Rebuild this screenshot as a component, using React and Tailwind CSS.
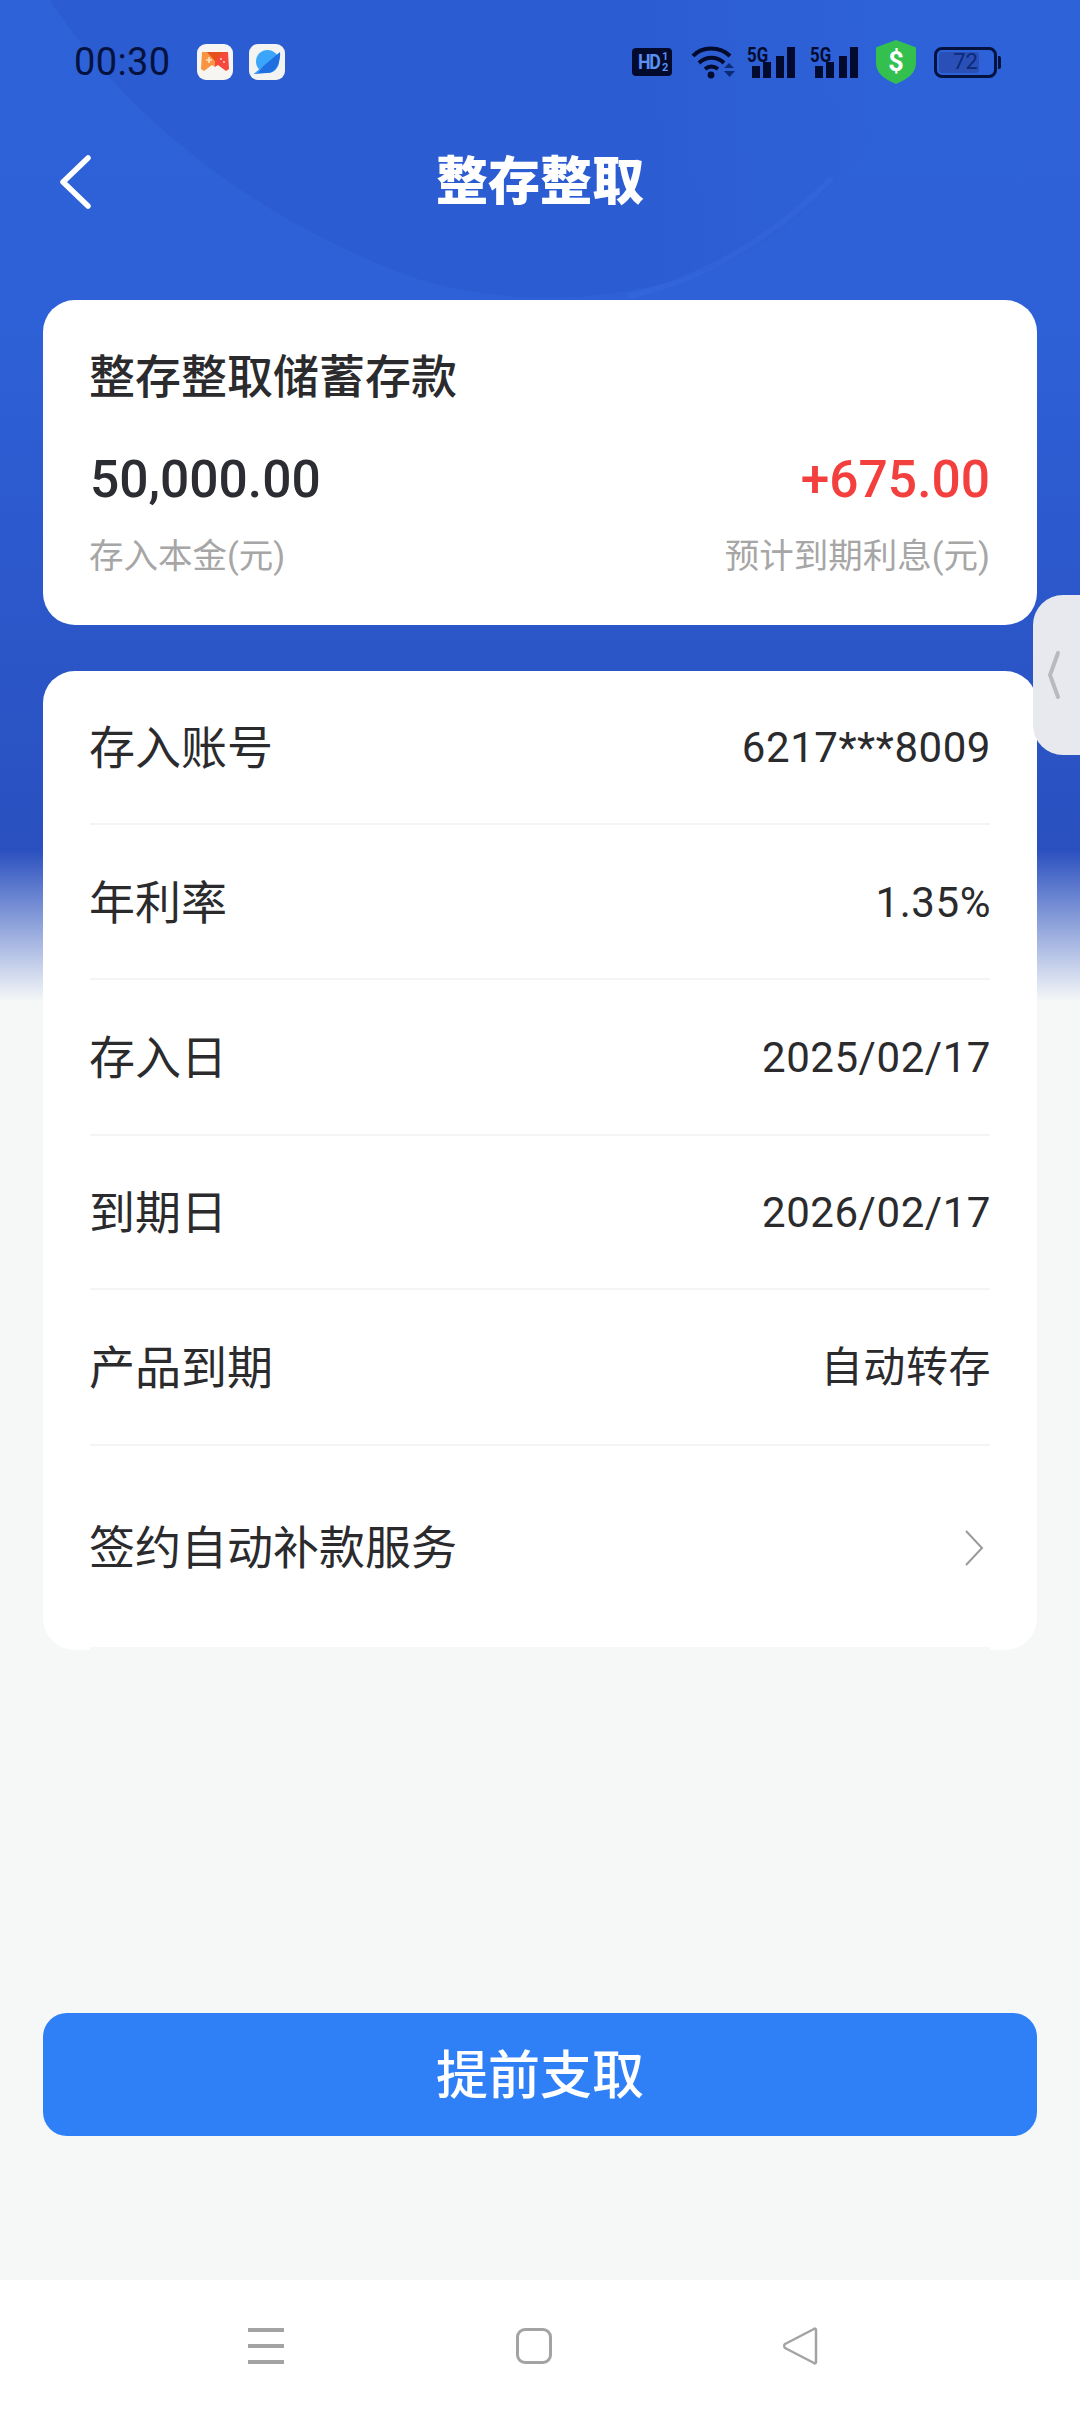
const font = { fontFamily: '"Roboto","Noto Sans CJK SC",sans-serif' };

function StatusBar() {
  return (
    <div className="relative flex h-[124px] items-center justify-between pl-[74px] pr-[79px]">
      <div className="flex items-center">
        <span className="w-[98px] text-[38px] leading-none tracking-[0.4px] text-[#04123f]">00:30</span>
        <div className="ml-[25px] flex h-[36px] w-[36px] items-center justify-center rounded-[9px] bg-[#f7f5f2]">
          <svg width="30" height="22" viewBox="0 0 30 22">
            <path d="M2 1h13v15l-3-2-8 6-3-2z" fill="#f99440" />
            <path d="M15 1h13l1 17-3 2-8-6-3 2z" fill="#f6483c" />
            <path d="M7 1h16l-8 9z" fill="#e5501c" />
            <path d="M6 9h6M9 6v6" stroke="#fde5c8" strokeWidth="1.6" />
            <circle cx="21" cy="8" r="1" fill="#ffd6d0" />
            <circle cx="24" cy="11" r="1" fill="#ffd6d0" />
          </svg>
        </div>
        <div className="ml-[16px] flex h-[36px] w-[36px] items-center justify-center rounded-[9px] bg-[#f3f3f1]">
          <svg width="30" height="30" viewBox="0 0 30 30">
            <circle cx="15.5" cy="14.5" r="11.5" fill="#3ba5f9" />
            <path d="M2 27 28 5c1 10-4 21-13 21-4 0-9 1-13 1z" fill="#1f6fe0" />
            <path d="M2 27 12 18l-6 8z" fill="#3ba5f9" />
          </svg>
        </div>
      </div>
      <div className="flex items-center">
        <div className="flex h-[28px] w-[40px] items-center justify-center gap-[1px] rounded-[4px] bg-[#020b2e] text-[#5b8ff0]">
          <span className="origin-center scale-x-[0.85] text-[21px] font-bold leading-none tracking-[-1.5px]">HD</span>
          <span className="flex flex-col items-center text-[11px] font-bold leading-[11px]">
            <span>1</span>
            <span>2</span>
          </span>
        </div>
        <svg className="ml-[19px]" width="44" height="33" viewBox="0 0 44 33">
          <path d="M2 10C11 0 29 0 39 10M8 17c7-7 18-7 25 0M14 23c4-3 9-3 13 0" fill="none" stroke="#020b2e" strokeWidth="4" />
          <circle cx="20" cy="29" r="3.4" fill="#020b2e" />
          <path d="M33 22l5-5 5 5zM33 25h11l-5.500 6z" fill="#0b2a78" />
        </svg>
        <Signal className="ml-[13px]" />
        <Signal className="ml-[16px]" />
        <svg className="ml-[18px]" width="40" height="44" viewBox="0 0 40 44">
          <path d="M20 0 39 7c1 0 1 1 1 1v15c0 10-8 16-20 21C8 39 0 33 0 23V8s0-1 1-1z" fill="#34c04f" />
          <text x="20" y="31" textAnchor="middle" fontSize="27" fontWeight="700" fill="#fff" fontFamily="Roboto">$</text>
        </svg>
        <div className="ml-[18px] flex items-center">
          <div className="relative flex h-[31px] w-[63px] items-center justify-center overflow-hidden rounded-[8px] border-[3px] border-[#04123f]">
            <div className="absolute inset-y-[2px] left-[2px] w-[40px] rounded-[3px] bg-[#2a50b8]" />
            <span className="relative text-[22px] leading-none text-[#0b2a7a]">72</span>
          </div>
          <div className="ml-[1px] h-[13px] w-[3px] rounded-r-[2px] bg-[#04123f]" />
        </div>
      </div>
    </div>
  );
}

function Signal({ className }) {
  return (
    <div className={`relative h-[32px] w-[47px] ${className}`}>
      <span className="absolute left-[-1px] top-[-1px] origin-left scale-x-[0.8] text-[21px] font-bold leading-none text-[#020b2e]">5G</span>
      <div className="absolute bottom-0 right-0 flex items-end">
        <div className="h-[12px] w-[8px] bg-[#020b2e]" />
        <div className="ml-[3px] h-[16px] w-[8px] bg-[#020b2e]" />
        <div className="ml-[5px] h-[22px] w-[8px] bg-[#020b2e]" />
        <div className="ml-[3px] h-[31px] w-[8px] bg-[#020b2e]" />
      </div>
    </div>
  );
}

function Row({ label, value, h }) {
  return (
    <div className={`flex items-center justify-between border-b-2 border-[#f3f4f5] ${h}`}>
      <span className="relative left-[-1px] top-[1px] text-[46px] leading-none text-[#2b2b2e]">{label}</span>
      <span className="relative left-[1px] top-[1px] text-[42px] leading-none tracking-[0.55px] text-[#2b2b2e]">{value}</span>
    </div>
  );
}

export default function App() {
  return (
    <div style={font} className="relative flex h-[2412px] w-[1080px] flex-col overflow-hidden bg-[linear-gradient(180deg,#2e62d9_0px,#2e61d8_300px,#2b56c8_650px,#2a50bf_850px,#f6f8f8_1002px)]">
      <svg className="absolute left-0 top-0" width="1080" height="300" viewBox="0 0 1080 300">
        <defs>
          <linearGradient id="arc" x1="0" x2="1" y1="0" y2="0">
            <stop offset="0.62" stopColor="#2c5cd1" stopOpacity="1" />
            <stop offset="0.9" stopColor="#2c5cd1" stopOpacity="0" />
          </linearGradient>
        </defs>
        <path d="M50 0C120 110 250 220 420 280C520 310 640 300 720 265C790 235 840 190 900 100L980 0z" fill="url(#arc)" />
        <path d="M630 296C700 280 770 240 830 180" fill="none" stroke="#3a6ae0" strokeWidth="6" opacity="0.4" strokeLinecap="round" />
      </svg>

      <StatusBar />

      <header className="relative flex h-[116px] items-center justify-center">
        <svg className="absolute left-[56px] top-[28px]" width="36" height="60" viewBox="0 0 36 60">
          <path d="M32 6 7 30l25 24" fill="none" stroke="#fff" strokeWidth="5.500" strokeLinecap="round" strokeLinejoin="round" />
        </svg>
        <h1 className="relative top-[1px] text-[52px] font-black leading-none text-white">整存整取</h1>
      </header>

      <main className="relative mt-[60px] flex flex-col px-[43px]">
        <section className="flex h-[325px] flex-col rounded-[32px] bg-white px-[47px] pt-[54px]">
          <h2 className="ml-[-1px] text-[46px] font-medium leading-none text-[#2b2b2e]">整存整取储蓄存款</h2>
          <div className="mt-[54px] flex items-center justify-between text-[51.5px] font-medium leading-none">
            <span className="text-[#2b2d33]">50,000.00</span>
            <span className="text-[#f43f3f]">+675.00</span>
          </div>
          <div className="mt-[33px] flex items-center justify-between text-[34.5px] leading-none text-[#a6a6a6]">
            <span className="ml-[-1px]">存入本金(元)</span>
            <span>预计到期利息(元)</span>
          </div>
        </section>

        <section className="mt-[46px] flex h-[979px] flex-col rounded-[32px] bg-white px-[47px]">
          <Row label="存入账号" value="6217***8009" h="h-[154px]" />
          <Row label="年利率" value="1.35%" h="h-[155px]" />
          <Row label="存入日" value="2025/02/17" h="h-[156px]" />
          <Row label="到期日" value="2026/02/17" h="h-[154px]" />
          <Row label="产品到期" value="自动转存" h="h-[156px]" />
          <div className="flex h-[204px] items-center justify-between border-b-[3px] border-[#f6f8f8] pt-[2px]">
            <span className="ml-[-1px] text-[46px] leading-none text-[#2b2b2e]">签约自动补款服务</span>
            <svg className="mr-[6px]" width="20" height="36" viewBox="0 0 20 36">
              <path d="M2 1 18 18 2 35" fill="none" stroke="#9a9a9a" strokeWidth="2" />
            </svg>
          </div>
        </section>

        <button className="mt-[363px] flex h-[123px] items-center justify-center rounded-[24px] bg-[#2f80f6] pt-[5px] text-[52px] font-medium leading-none text-white">提前支取</button>
      </main>

      <nav className="absolute bottom-0 left-0 h-[132px] w-full bg-white">
        <div className="absolute left-[248px] top-[48px] flex h-[36px] w-[36px] flex-col justify-between">
          <div className="h-[4px] bg-[#a3a3a3]" />
          <div className="h-[4px] bg-[#a3a3a3]" />
          <div className="h-[4px] bg-[#a3a3a3]" />
        </div>
        <div className="absolute left-[516px] top-[48px] h-[36px] w-[36px] rounded-[9px] border-[3px] border-[#a3a3a3]" />
        <svg className="absolute left-[782px] top-[47px]" width="36" height="38" viewBox="0 0 36 38">
          <path d="M34 3c0-1-1-2-2-1L3 17c-1 1-1 3 0 4l29 15c1 1 2 0 2-1z" fill="none" stroke="#a3a3a3" strokeWidth="2.500" strokeLinejoin="round" />
        </svg>
      </nav>

      <aside className="absolute right-0 top-[595px] flex h-[160px] w-[47px] items-center rounded-l-[30px] bg-[#e8e9ee]">
        <svg className="ml-[13px]" width="16" height="50" viewBox="0 0 16 50">
          <path d="M12 3 4 25l8 22" fill="none" stroke="#b8bac0" strokeWidth="4" strokeLinecap="round" />
        </svg>
      </aside>
    </div>
  );
}
